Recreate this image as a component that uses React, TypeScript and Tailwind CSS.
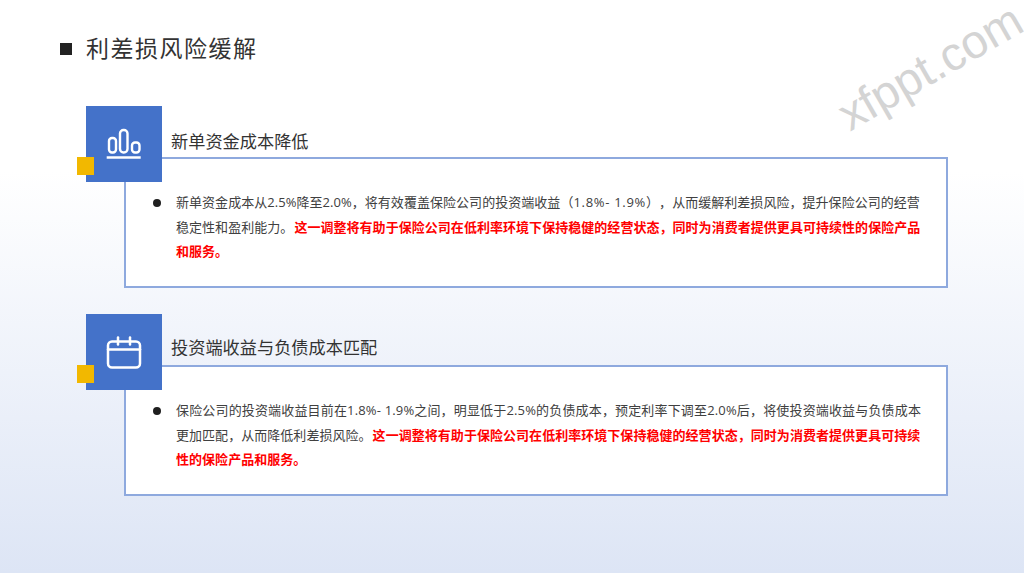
function BarsIcon() {
  return (
    <svg width="36" height="32" viewBox="0 0 36 32" fill="none" stroke="#fff" strokeWidth="2.4">
      <rect x="3" y="10" width="7" height="14.5" rx="3" />
      <rect x="14" y="2" width="7.5" height="22.5" rx="3.5" />
      <rect x="26" y="14.5" width="7.5" height="10" rx="3" />
      <path d="M0.7 29.5H34.7" strokeWidth="2.6" />
    </svg>
  );
}

function CalendarIcon() {
  return (
    <svg width="36" height="33" viewBox="0 0 36 33" fill="none" stroke="#fff" strokeWidth="2.5" strokeLinecap="round">
      <rect x="2" y="5.5" width="32" height="26" rx="4" />
      <path d="M2 13.5H34" />
      <path d="M12 1.5V8.5" />
      <path d="M24 1.5V8.5" />
    </svg>
  );
}

function Section({
  title,
  titleClass,
  icon,
  children,
}: {
  title: string;
  titleClass: string;
  icon: React.ReactNode;
  children: React.ReactNode;
}) {
  return (
    <section className="relative w-[862px]">
      <div className="absolute left-0 top-0 z-10 flex h-[76px] w-[76px] items-center justify-center bg-[#4472c9]">
        {icon}
      </div>
      <div className="absolute left-[-9px] top-[51px] z-20 h-[18px] w-[17px] bg-[#f2b800]" />
      <h2 className={`flex h-[51px] items-center pl-[85px] text-[17.2px] font-normal leading-none text-[#333] ${titleClass}`}>
        {title}
      </h2>
      <div className="ml-[38px] flex h-[131px] border-2 border-[#8ea9de] bg-white pl-[27px] pt-[31px]">
        <span className="mt-[9px] h-[8px] w-[8px] shrink-0 rounded-full bg-[#1f1f1f]" />
        <p className="ml-[15px] whitespace-nowrap text-[13px] leading-[24.5px] tracking-[0.04px] text-[#404040] [text-spacing-trim:space-all]">
          {children}
        </p>
      </div>
    </section>
  );
}

export default function App() {
  return (
    <div className="relative h-[573px] w-[1024px] overflow-hidden bg-gradient-to-b from-white from-[30%] to-[#dde5f5] font-['Open_Sans','Noto_Sans_CJK_SC',sans-serif]">
      <div className="absolute left-[828px] top-[43px] rotate-[-30deg] whitespace-nowrap font-['Liberation_Sans',sans-serif] text-[47px] leading-none text-[#d4d4d4]">
        xfppt.com
      </div>

      <header className="mt-[34px] flex h-[30px] items-center pl-[60px]">
        <span className="h-[12px] w-[12px] bg-[#222]" />
        <h1 className="ml-[14px] -translate-y-[2px] font-['Noto_Sans_CJK_SC',sans-serif] text-[23px] font-normal leading-[30px] tracking-[1.5px] text-[#333]">
          利差损风险缓解
        </h1>
      </header>

      <div className="flex flex-col gap-[26px] pl-[86px] pt-[42px]">
        <Section title="新单资金成本降低" titleClass="pt-[21px]" icon={<BarsIcon />}>
          新单资金成本从2.5%降至2.0%，将有效覆盖保险公司的投资端收益（
          <span className="tracking-[0.7px]">1.8%- 1.9%</span>），从而缓解利差损风险，提升保险公司的经营
          <br />
          稳定性和盈利能力。
          <b className="ml-[1px] font-bold text-[#ff0000]">
            这一调整将有助于保险公司在低利率环境下保持稳健的经营状态，同时为消费者提供更具可持续性的保险产品
            <br />
            和服务。
          </b>
        </Section>
        <Section title="投资端收益与负债成本匹配" titleClass="pt-[16px]" icon={<CalendarIcon />}>
          <span className="tracking-[0.16px]">
            保险公司的投资端收益目前在1.8%- 1.9%之间，明显低于2.5%的负债成本，预定利率下调至2.0%后，将使投资端收益与负债成本
          </span>
          <br />
          更加匹配，从而降低利差损风险。
          <b className="ml-[1px] font-bold text-[#ff0000]">
            这一调整将有助于保险公司在低利率环境下保持稳健的经营状态，同时为消费者提供更具可持续
            <br />
            性的保险产品和服务。
          </b>
        </Section>
      </div>
    </div>
  );
}
